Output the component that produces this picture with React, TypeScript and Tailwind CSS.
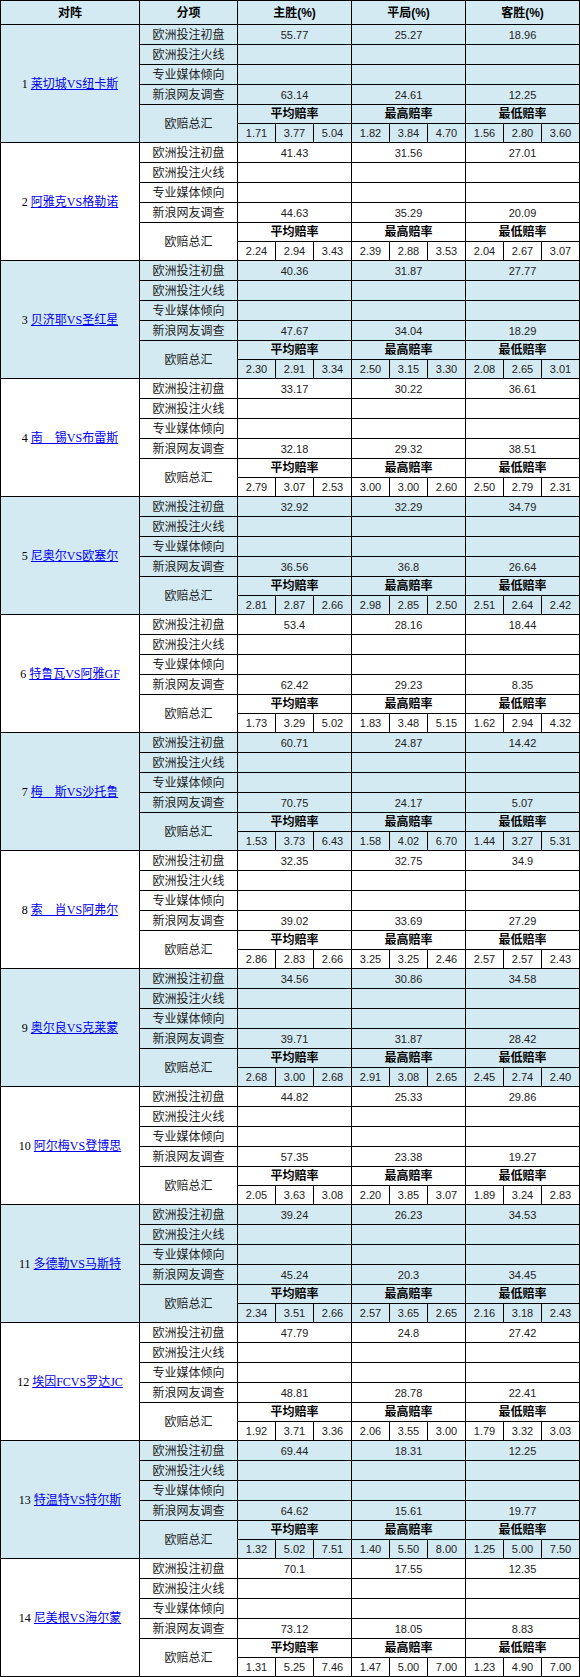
import React from "react";

type Group = {
  name: string;
  a: [string, string, string];
  b: [string, string, string];
  odds: string[];
};

const groups: Group[] = [
  { name: "莱切城VS纽卡斯", a: ["55.77", "25.27", "18.96"], b: ["63.14", "24.61", "12.25"], odds: ["1.71", "3.77", "5.04", "1.82", "3.84", "4.70", "1.56", "2.80", "3.60"] },
  { name: "阿雅克VS格勒诺", a: ["41.43", "31.56", "27.01"], b: ["44.63", "35.29", "20.09"], odds: ["2.24", "2.94", "3.43", "2.39", "2.88", "3.53", "2.04", "2.67", "3.07"] },
  { name: "贝济耶VS圣红星", a: ["40.36", "31.87", "27.77"], b: ["47.67", "34.04", "18.29"], odds: ["2.30", "2.91", "3.34", "2.50", "3.15", "3.30", "2.08", "2.65", "3.01"] },
  { name: "南　锡VS布雷斯", a: ["33.17", "30.22", "36.61"], b: ["32.18", "29.32", "38.51"], odds: ["2.79", "3.07", "2.53", "3.00", "3.00", "2.60", "2.50", "2.79", "2.31"] },
  { name: "尼奥尔VS欧塞尔", a: ["32.92", "32.29", "34.79"], b: ["36.56", "36.8", "26.64"], odds: ["2.81", "2.87", "2.66", "2.98", "2.85", "2.50", "2.51", "2.64", "2.42"] },
  { name: "特鲁瓦VS阿雅GF", a: ["53.4", "28.16", "18.44"], b: ["62.42", "29.23", "8.35"], odds: ["1.73", "3.29", "5.02", "1.83", "3.48", "5.15", "1.62", "2.94", "4.32"] },
  { name: "梅　斯VS沙托鲁", a: ["60.71", "24.87", "14.42"], b: ["70.75", "24.17", "5.07"], odds: ["1.53", "3.73", "6.43", "1.58", "4.02", "6.70", "1.44", "3.27", "5.31"] },
  { name: "索　肖VS阿弗尔", a: ["32.35", "32.75", "34.9"], b: ["39.02", "33.69", "27.29"], odds: ["2.86", "2.83", "2.66", "3.25", "3.25", "2.46", "2.57", "2.57", "2.43"] },
  { name: "奥尔良VS克莱蒙", a: ["34.56", "30.86", "34.58"], b: ["39.71", "31.87", "28.42"], odds: ["2.68", "3.00", "2.68", "2.91", "3.08", "2.65", "2.45", "2.74", "2.40"] },
  { name: "阿尔梅VS登博思", a: ["44.82", "25.33", "29.86"], b: ["57.35", "23.38", "19.27"], odds: ["2.05", "3.63", "3.08", "2.20", "3.85", "3.07", "1.89", "3.24", "2.83"] },
  { name: "多德勒VS马斯特", a: ["39.24", "26.23", "34.53"], b: ["45.24", "20.3", "34.45"], odds: ["2.34", "3.51", "2.66", "2.57", "3.65", "2.65", "2.16", "3.18", "2.43"] },
  { name: "埃因FCVS罗达JC", a: ["47.79", "24.8", "27.42"], b: ["48.81", "28.78", "22.41"], odds: ["1.92", "3.71", "3.36", "2.06", "3.55", "3.00", "1.79", "3.32", "3.03"] },
  { name: "特温特VS特尔斯", a: ["69.44", "18.31", "12.25"], b: ["64.62", "15.61", "19.77"], odds: ["1.32", "5.02", "7.51", "1.40", "5.50", "8.00", "1.25", "5.00", "7.50"] },
  { name: "尼美根VS海尔蒙", a: ["70.1", "17.55", "12.35"], b: ["73.12", "18.05", "8.83"], odds: ["1.31", "5.25", "7.46", "1.47", "5.00", "7.00", "1.23", "4.90", "7.00"] },
];

const sans = "font-['Liberation_Sans','Noto_Sans_CJK_SC',sans-serif]";

function GroupCells({ g, i }: { g: Group; i: number }) {
  const bg = i % 2 === 0 ? "bg-[#d3eaf2]" : "bg-white";
  const cell = `${bg} flex items-center justify-center leading-[16px] overflow-hidden`;
  const label = `${cell} ${sans} text-[12px] text-[#222]`;
  const num = `${cell} ${sans} text-[11px] text-[#222]`;
  const rows: { label: string; vals: [string, string, string] | null }[] = [
    { label: "欧洲投注初盘", vals: g.a },
    { label: "欧洲投注火线", vals: null },
    { label: "专业媒体倾向", vals: null },
    { label: "新浪网友调查", vals: g.b },
  ];
  return (
    <>
      <div className={`${cell} row-span-6 font-['Liberation_Serif','Noto_Sans_CJK_SC',serif] text-[12px] text-black`}>
        <span>
          {i + 1}{" "}
          <a href="#" className="text-[#0000ee] underline">
            {g.name}
          </a>
        </span>
      </div>
      {rows.map((r) => (
        <React.Fragment key={r.label}>
          <div className={label}>{r.label}</div>
          <div className={`${num} col-span-3`}>{r.vals ? r.vals[0] : ""}</div>
          <div className={`${num} col-span-3`}>{r.vals ? r.vals[1] : ""}</div>
          <div className={`${num} col-span-3`}>{r.vals ? r.vals[2] : ""}</div>
        </React.Fragment>
      ))}
      <div className={`${label} row-span-2`}>欧赔总汇</div>
      <div className={`${label} col-span-3 font-bold text-black`}>平均赔率</div>
      <div className={`${label} col-span-3 font-bold text-black`}>最高赔率</div>
      <div className={`${label} col-span-3 font-bold text-black`}>最低赔率</div>
      {g.odds.map((o, k) => (
        <div key={k} className={num}>
          {o}
        </div>
      ))}
    </>
  );
}

export default function App() {
  const head = `bg-[#d3eaf2] flex items-center justify-center ${sans} text-[12px] font-bold text-black leading-[16px]`;
  return (
    <div className="w-[580px] bg-white">
      <div className="grid grid-cols-[138px_97px_repeat(9,37px)] grid-rows-[23px_repeat(14,19px_19px_19px_19px_18px_18px)] gap-px bg-black p-px">
        <div className={head}>对阵</div>
        <div className={head}>分项</div>
        <div className={`${head} col-span-3`}>主胜(%)</div>
        <div className={`${head} col-span-3`}>平局(%)</div>
        <div className={`${head} col-span-3`}>客胜(%)</div>
        {groups.map((g, i) => (
          <GroupCells key={i} g={g} i={i} />
        ))}
      </div>
    </div>
  );
}
